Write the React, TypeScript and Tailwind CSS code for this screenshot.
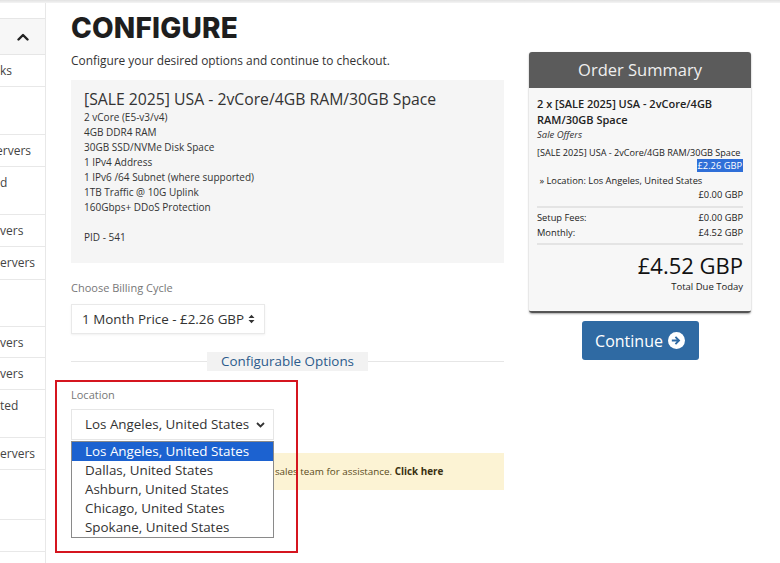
import React from "react";

const sideItems: { h: number; t: string; ml?: number; two?: boolean }[] = [
  { h: 32, t: "ks", ml: 0 },
  { h: 48, t: "", two: true },
  { h: 32, t: "ervers", ml: -4 },
  { h: 48, t: "d", ml: 0, two: true },
  { h: 32, t: "vers", ml: 0 },
  { h: 33, t: "ervers", ml: 0 },
  { h: 47, t: "", two: true },
  { h: 31, t: "vers", ml: 0 },
  { h: 32, t: "vers", ml: 0 },
  { h: 48, t: "ted", ml: 0, two: true },
  { h: 32, t: "ervers", ml: 0 },
  { h: 50, t: "", two: true },
  { h: 32, t: "" },
  { h: 32, t: "" },
];

const features = [
  "2 vCore (E5-v3/v4)",
  "4GB DDR4 RAM",
  "30GB SSD/NVMe Disk Space",
  "1 IPv4 Address",
  "1 IPv6 /64 Subnet (where supported)",
  "1TB Traffic @ 10G Uplink",
  "160Gbps+ DDoS Protection",
];

const locations = [
  "Los Angeles, United States",
  "Dallas, United States",
  "Ashburn, United States",
  "Chicago, United States",
  "Spokane, United States",
];

export default function App() {
  return (
    <div
      className="relative w-[780px] h-[563px] overflow-hidden bg-white text-[#333]"
      style={{ fontFamily: '"Open Sans", "Noto Sans", sans-serif' }}
    >
      <div className="h-[3px] bg-gradient-to-b from-[#e2e2e2] to-[#f4f4f4]" />
      <div className="flex">
        {/* Sidebar */}
        <aside className="w-[46px] shrink-0 h-[560px] border-r border-[#e8e8e8] pt-[15px] overflow-hidden">
          <div className="h-[37px] bg-[#f7f7f7] border-y border-[#e6e6e6] flex items-center justify-end pr-[16px]">
            <svg width="12" height="8" viewBox="0 0 12 8">
              <path d="M1.5 6.5 L6 2 L10.5 6.5" fill="none" stroke="#222" strokeWidth="2.4" strokeLinecap="round" strokeLinejoin="round" />
            </svg>
          </div>
          {sideItems.map((it, i) => (
            <div
              key={i}
              className="border-b border-[#e8e8e8] py-[8px] text-[12px] leading-[16px] text-[#444] whitespace-nowrap overflow-hidden"
              style={{ height: it.h }}
            >
              <div style={{ marginLeft: it.ml ?? 0 }}>{it.t || "\u00a0"}</div>
              {it.two && <div>{"\u00a0"}</div>}
            </div>
          ))}
        </aside>

        {/* Main */}
        <main className="w-[433px] ml-[25px] shrink-0">
          <h1
            className="mt-[11px] text-[28px] leading-[28px] font-extrabold text-[#1e1e1e] tracking-[0.2px]"
            style={{ fontFamily: 'Inter, "Noto Sans", sans-serif' }}
          >
            CONFIGURE
          </h1>
          <p className="mt-[10px] text-[11.9px] leading-[16px] text-[#333]">
            Configure your desired options and continue to checkout.
          </p>

          <div className="mt-[12px] h-[183px] bg-[#f5f5f5] pl-[13px] pt-[8px]">
            <div className="text-[15.75px] leading-[22px] text-[#333]">
              [SALE 2025] USA - 2vCore/4GB RAM/30GB Space
            </div>
            <div className="text-[10px] leading-[15px] text-[#333]">
              {features.map((f) => (
                <div key={f}>{f}</div>
              ))}
              <div>&nbsp;</div>
              <div>PID - 541</div>
            </div>
          </div>

          <div className="mt-[18px] text-[11px] leading-[14px] text-[#777]">Choose Billing Cycle</div>
          <div className="mt-[9px] w-[194px] h-[30px] bg-white border border-[#e9e9e9] shadow-[0_1px_2px_rgba(0,0,0,0.06)] flex items-center pl-[10px] pr-[9px] justify-between">
            <span className="text-[13.4px] text-[#333] whitespace-nowrap">1 Month Price - £2.26 GBP</span>
            <svg width="7" height="10" viewBox="0 0 7 10">
              <path d="M0.5 4 L3.5 0.8 L6.5 4 Z M0.5 6 L3.5 9.2 L6.5 6 Z" fill="#333" />
            </svg>
          </div>

          <div className="mt-[18px] flex items-center h-[19px]">
            <div className="flex-1 h-px bg-[#e6e6e6]" />
            <div className="w-[161px] h-[19px] bg-[#f2f2f2] text-[13.4px] leading-[19px] text-center text-[#2b5b8c]">
              Configurable Options
            </div>
            <div className="flex-1 h-px bg-[#e6e6e6]" />
          </div>

          <div className="mt-[17px] text-[11px] leading-[14px] text-[#777]">Location</div>
          <div className="relative mt-[7px] w-[203px]">
            <div className="h-[31px] bg-white border border-[#e6e6e6] flex items-center pl-[13px] pr-[8px] justify-between">
              <span className="text-[13.4px] text-[#333] whitespace-nowrap">Los Angeles, United States</span>
              <svg width="9" height="6" viewBox="0 0 9 6">
                <path d="M1 1 L4.5 4.5 L8 1" fill="none" stroke="#333" strokeWidth="1.8" />
              </svg>
            </div>
            <div className="absolute z-10 left-0 top-[32px] w-[203px] bg-white border border-[#8a8a8a]">
              {locations.map((l, i) => (
                <div
                  key={l}
                  className={
                    i === 0
                      ? "h-[19px] leading-[19px] pl-[13px] text-[13.4px] bg-[#1c62d0] text-white whitespace-nowrap"
                      : "h-[19px] leading-[19px] pl-[13px] text-[13.4px] text-[#333] whitespace-nowrap"
                  }
                >
                  {l}
                </div>
              ))}
            </div>
          </div>

          <div className="mt-[13px] h-[37px] bg-[#fcf3d4] flex items-center pl-[70px] text-[9.85px] text-[#5a4a1a] whitespace-nowrap">
            <span>
              Have questions? Contact our sales team for assistance. <b className="font-bold text-[#3a3010]">Click here</b>
            </span>
          </div>
        </main>

        {/* Right column */}
        <div className="w-[222px] ml-[25px] shrink-0 pt-[49px]">
          <div className="rounded-[3px] border-b-[2px] border-[#555] shadow-[0_1px_2px_rgba(0,0,0,0.35)] overflow-hidden">
            <div className="h-[36px] bg-[#5b5b5b] text-[#efefef] text-[16.5px] leading-[36px] text-center">
              Order Summary
            </div>
            <div className="bg-[#f7f7f7] px-[8px] pt-[8px] pb-[18px] text-[#222]">
              <div className="text-[11px] leading-[16px] font-semibold">
                2 x [SALE 2025] USA - 2vCore/4GB
                <br />
                RAM/30GB Space
              </div>
              <div className="text-[9.5px] leading-[14px] italic text-[#333]">Sale Offers</div>
              <div className="mt-[4px] text-[9.1px] leading-[13px] whitespace-nowrap">
                [SALE 2025] USA - 2vCore/4GB RAM/30GB Space
              </div>
              <div className="text-[9.3px] leading-[13px] text-right">
                <span className="bg-[#2f6fd8] text-white px-[1px]">£2.26 GBP</span>
              </div>
              <div className="mt-[2px] text-[9.3px] leading-[14px]">&nbsp;» Location: Los Angeles, United States</div>
              <div className="text-[9.3px] leading-[14px] text-right">£0.00 GBP</div>
              <div className="mt-[4px] border-t-2 border-[#e4e4e4]" />
              <div className="mt-[2px] text-[9.3px] leading-[15px]">
                <div className="flex justify-between">
                  <span>Setup Fees:</span>
                  <span>£0.00 GBP</span>
                </div>
                <div className="flex justify-between">
                  <span>Monthly:</span>
                  <span>£4.52 GBP</span>
                </div>
              </div>
              <div className="mt-[3px] border-t-2 border-[#e4e4e4]" />
              <div className="mt-[6px] text-[22px] leading-[28px] text-right text-[#111]">£4.52 GBP</div>
              <div className="mt-[2px] text-[9.5px] leading-[12px] text-right">Total Due Today</div>
            </div>
          </div>
          <div className="mt-[8px] flex justify-center">
            <button className="w-[117px] h-[39px] rounded-[3px] bg-[#2f6aa3] text-white text-[16px] flex items-center justify-center gap-[5px]">
              <span>Continue</span>
              <svg width="17" height="17" viewBox="0 0 16 16">
                <circle cx="8" cy="8" r="8" fill="#fff" />
                <path d="M3.6 7 H8.2 L6.4 5.2 L7.6 4 L11.6 8 L7.6 12 L6.4 10.8 L8.2 9 H3.6 Z" fill="#2f6aa3" />
              </svg>
            </button>
          </div>
        </div>
      </div>

      {/* Red annotation box */}
      <div className="absolute left-[55px] top-[380px] w-[243px] h-[173px] border-2 border-[#d5151f] z-20 pointer-events-none" />
    </div>
  );
}
